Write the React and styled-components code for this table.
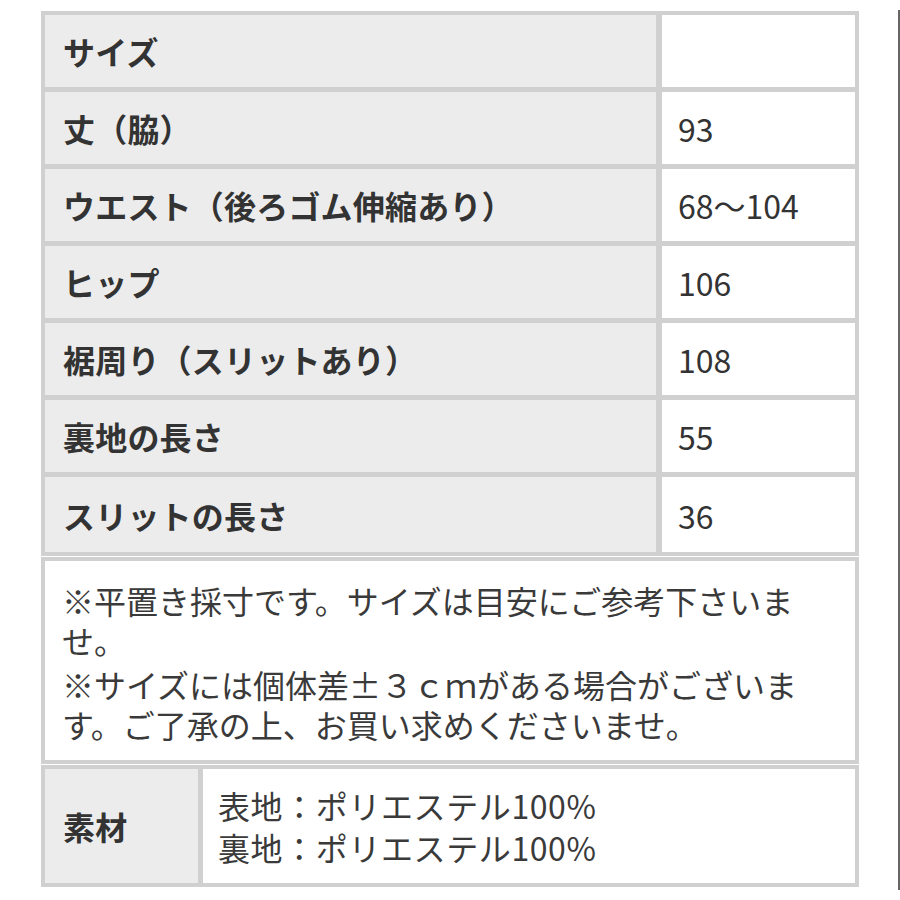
import React from "react";
import styled, { createGlobalStyle } from "styled-components";

const GlobalStyle = createGlobalStyle`
  html, body {
    margin: 0;
    padding: 0;
    background: #fff;
    overflow: hidden;
  }
  body {
    font-family: "Noto Sans CJK JP", "Noto Sans", sans-serif;
    color: #333;
  }
`;

const Page = styled.div`
  box-sizing: border-box;
  width: 900px;
  min-height: 880px;
  margin-top: 10px;
  padding: 1px 0 0 41px;
  border-right: 2px solid #666;
  display: flex;
  flex-direction: column;
  gap: 1px;
`;

const Block = styled.div`
  box-sizing: border-box;
  width: 818px;
  border: 4px solid #d0d0d0;
  background: #d0d0d0;
`;

const SizeGrid = styled(Block)`
  display: grid;
  grid-template-columns: 611px 193px;
  grid-template-rows: repeat(6, 72px) 75px;
  gap: 5px 6px;
`;

const Label = styled.div`
  display: flex;
  align-items: center;
  padding-left: 18px;
  background: #ececec;
  font-size: 32px;
  font-weight: 700;
  color: #333;
  letter-spacing: 0.2px;
`;

const Value = styled.div`
  display: flex;
  align-items: center;
  padding-left: 16px;
  background: #fff;
  font-size: 32px;
  font-weight: 400;
  color: #333;
`;

const Notes = styled(Block)`
  height: 207px;
  background: #fff;
  padding: 19px 18px 0 17px;
  font-size: 32px;
  line-height: 40px;
  color: #3a3a3a;
`;

const Note = styled.p`
  margin: 0 0 4px;
`;

const MaterialGrid = styled(Block)`
  display: grid;
  grid-template-columns: 153px 1fr;
  grid-template-rows: 114px;
  column-gap: 5px;
`;

const MaterialList = styled(Value)`
  flex-direction: column;
  align-items: flex-start;
  justify-content: center;
  padding-left: 15px;
  line-height: 42px;
  letter-spacing: 0.6px;
  color: #3a3a3a;
`;

const sizes = [
  ["サイズ", ""],
  ["丈（脇）", "93"],
  ["ウエスト（後ろゴム伸縮あり）", "68〜104"],
  ["ヒップ", "106"],
  ["裾周り（スリットあり）", "108"],
  ["裏地の長さ", "55"],
  ["スリットの長さ", "36"],
];

export default function App() {
  return (
    <>
      <GlobalStyle />
      <Page>
        <SizeGrid>
          {sizes.map(([label, value]) => (
            <React.Fragment key={label}>
              <Label>{label}</Label>
              <Value>{value}</Value>
            </React.Fragment>
          ))}
        </SizeGrid>
        <Notes>
          <Note>※平置き採寸です。サイズは目安にご参考下さいませ。</Note>
          <Note>※サイズには個体差±３ｃｍがある場合がございます。ご了承の上、お買い求めくださいませ。</Note>
        </Notes>
        <MaterialGrid>
          <Label>素材</Label>
          <MaterialList>
            <span>表地：ポリエステル100%</span>
            <span>裏地：ポリエステル100%</span>
          </MaterialList>
        </MaterialGrid>
      </Page>
    </>
  );
}
